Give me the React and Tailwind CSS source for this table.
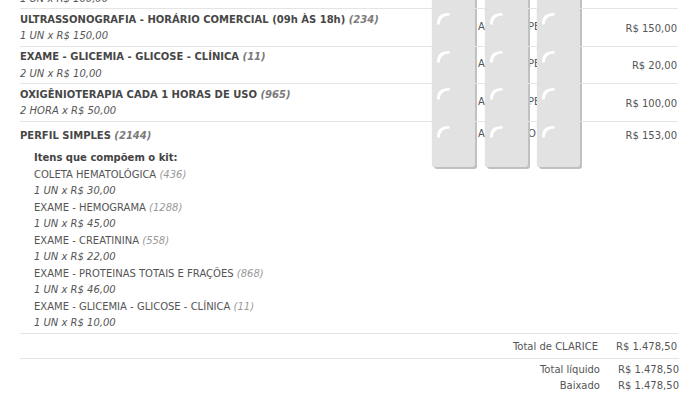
import React from "react";

function Boxes({ top, letters }) {
  return (
    <div className="absolute left-[412px] top-0 w-[170px] h-[47px]">
      <span className={`absolute left-[46px] ${top} leading-[16px] text-[10px] text-[#555]`}>A</span>
      <span className={`absolute left-[96px] ${top} leading-[16px] text-[10px] text-[#555]`}>{letters}</span>
      <div className="flex gap-[9.5px]">
        {[0, 1, 2].map((i) => (
          <div
            key={i}
            className="relative w-[43px] h-[45px] bg-[#e2e2e2] rounded-[3px] shadow-[2px_2px_0_0_#c0c0c0,0_0_1px_#d0d0d0]"
          >
            <svg className="absolute left-[4px] top-[3px]" width="15" height="13" viewBox="0 0 15 13">
              <path d="M1 12.5 C1 4.5 4.5 1 13.5 1 L13.5 3.4 C7.5 3.6 4.2 6 3.8 12.5 Z" fill="#ffffff" />
            </svg>
          </div>
        ))}
      </div>
    </div>
  );
}

function Row({ title, code, sub, price }) {
  return (
    <div className="relative border-t border-[#e4e4e4] pt-[2.5px] pb-[1px] flex items-center justify-between">
      <div>
        <div className="leading-[16.5px] font-bold text-[#474747] whitespace-nowrap">
          {title} <span className="italic text-[#7a7a7a]">({code})</span>
        </div>
        <div className="leading-[16.5px] italic text-[#555]">{sub}</div>
      </div>
      <div className="pr-[1px] text-[#555]">{price}</div>
      <Boxes top="top-[9.5px]" letters="PE" />
    </div>
  );
}

const kit = [
  ["COLETA HEMATOLÓGICA", "436", "1 UN x R$ 30,00"],
  ["EXAME - HEMOGRAMA", "1288", "1 UN x R$ 45,00"],
  ["EXAME - CREATININA", "558", "1 UN x R$ 22,00"],
  ["EXAME - PROTEINAS TOTAIS E FRAÇÕES", "868", "1 UN x R$ 46,00"],
  ["EXAME - GLICEMIA - GLICOSE - CLÍNICA", "11", "1 UN x R$ 10,00"],
];

export default function App() {
  return (
    <div className="w-[700px] h-[410px] overflow-hidden bg-white font-['DejaVu_Sans',sans-serif] text-[10px]">
      <div className="pl-[20px] pr-[22px] -mt-[29.2px]">
        <Row title="CONSULTA" code="1" sub="1 UN x R$ 100,00" price="R$ 100,00" />
        <Row title="ULTRASSONOGRAFIA - HORÁRIO COMERCIAL (09h ÀS 18h)" code="234" sub="1 UN x R$ 150,00" price="R$ 150,00" />
        <Row title="EXAME - GLICEMIA - GLICOSE - CLÍNICA" code="11" sub="2 UN x R$ 10,00" price="R$ 20,00" />
        <Row title="OXIGÊNIOTERAPIA CADA 1 HORAS DE USO" code="965" sub="2 HORA x R$ 50,00" price="R$ 100,00" />

        <div className="relative border-t border-[#e4e4e4] pt-[6.5px] pb-[1px]">
          <div className="flex justify-between">
            <div className="leading-[16.5px] font-bold text-[#474747]">
              PERFIL SIMPLES <span className="italic text-[#7a7a7a]">(2144)</span>
            </div>
            <div className="leading-[16.5px] pr-[1px] text-[#555]">R$ 153,00</div>
          </div>
          <div className="mt-[5.5px] pl-[14px] leading-[16.5px]">
            <div className="font-bold text-[#444]">Itens que compõem o kit:</div>
            {kit.map(([n, c, s]) => (
              <React.Fragment key={n}>
                <div className="text-[#555]">
                  {n} <span className="italic text-[#999]">({c})</span>
                </div>
                <div className="italic text-[#555]">{s}</div>
              </React.Fragment>
            ))}
          </div>
          <Boxes top="top-[4.5px]" letters="O" />
        </div>

        <div className="border-t border-[#e4e4e4] h-[25px] pt-[1px] flex items-center justify-end gap-[18px] text-[#555]">
          <span>Total de CLARICE</span>
          <span className="pr-[1px]">R$ 1.478,50</span>
        </div>
        <div className="border-t border-[#e4e4e4] pt-[3px] leading-[16.5px] text-[#555] flex justify-end gap-[18px] -mr-[1px]">
          <div className="text-right">
            <div>Total líquido</div>
            <div>Baixado</div>
          </div>
          <div>
            <div>R$ 1.478,50</div>
            <div>R$ 1.478,50</div>
          </div>
        </div>
      </div>
    </div>
  );
}
